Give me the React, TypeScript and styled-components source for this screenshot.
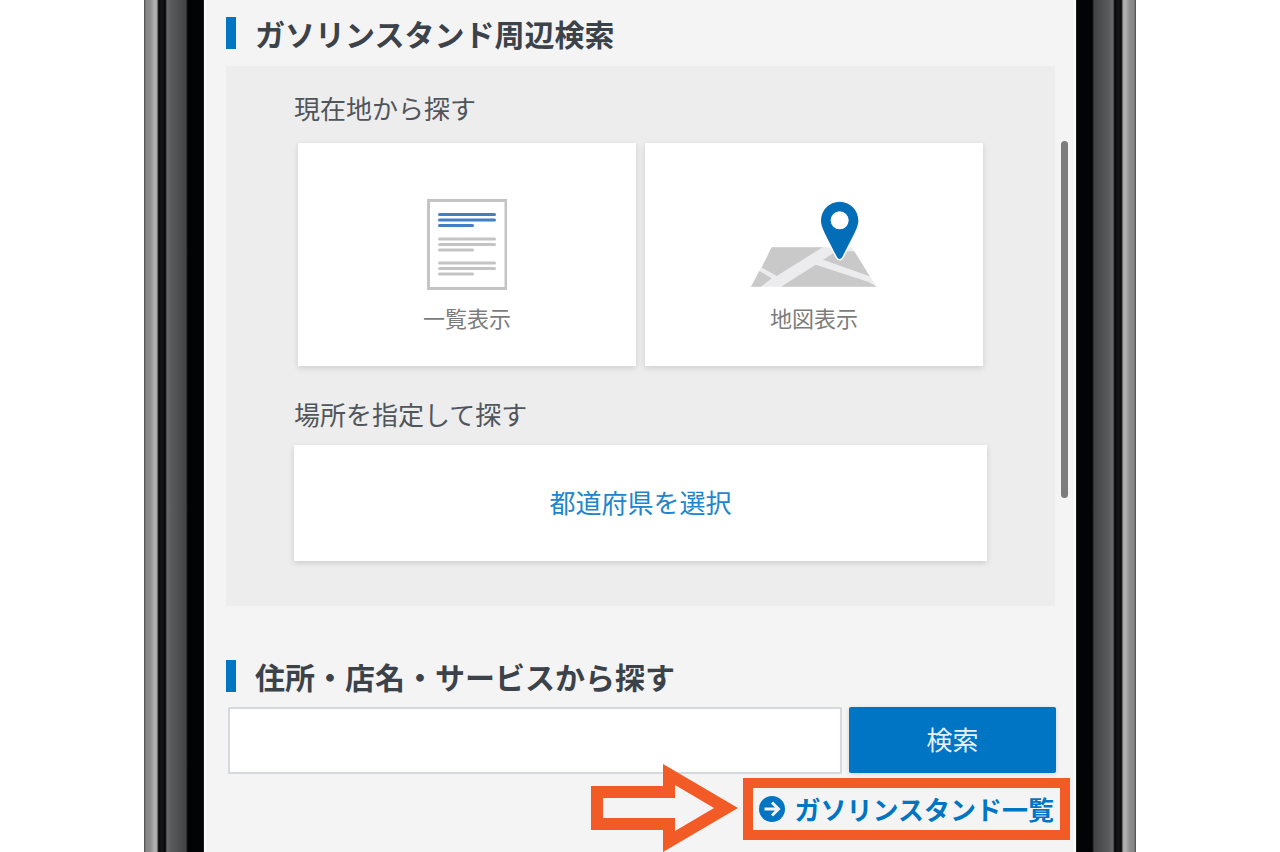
import styled, { createGlobalStyle } from "styled-components";

const GlobalStyle = createGlobalStyle`
  *, *::before, *::after { box-sizing: border-box; }
  body {
    margin: 0;
    background: #fff;
    color: #3c4249;
    font-family: "Noto Sans CJK JP", sans-serif;
  }
  button, input { font-family: inherit; }
`;

const Phone = styled.div`
  display: flex;
  width: 100%;
  max-width: 992px;
  min-height: 100vh;
  margin: 0 auto;
`;

const Bezel = styled.div<{ $side: "left" | "right" }>`
  flex: 0 0 60px;
  background: linear-gradient(
    to ${({ $side }) => ($side === "left" ? "right" : "left")},
    #4a4a4a 0, #858585 2px, #8c8c8c 6px, #b4b4b4 11px, #a5a5a5 13px, #333 14px,
    #08090b 15px, #18191b 18px, #050505 21px, #29292b 22px,
    #686a6c 23px, #58595b 28px, #424345 42px, #1b1b1c 43px,
    #020304 44px, #020304 59px, #3a3a3a 60px
  );
`;

const Screen = styled.main`
  position: relative;
  flex: 1;
  min-width: 0;
  padding: 17px 21px 12px 22px;
  background: #f4f4f4;
  box-shadow: inset 2px 0 #fafafa, inset -2px 0 #fafafa;
`;

const ScrollThumb = styled.div`
  position: absolute;
  top: 141px;
  right: 8px;
  width: 7px;
  height: 357px;
  border-radius: 4px;
  background: #7c7c7c;
`;

const Heading = styled.h2`
  margin: 0;
  padding-left: 19px;
  border-left: 10px solid #0075c2;
  font-size: 30px;
  font-weight: 700;
  line-height: 32px;
`;

const Panel = styled.section`
  margin: 17px 0 54px;
  padding: 26px 68px 45px;
  background: #ededed;
`;

const Label = styled.h3`
  margin: 0;
  color: #50555b;
  font-size: 26px;
  font-weight: 400;
  line-height: 32px;
`;

const Cards = styled.div`
  display: grid;
  grid-template-columns: 1fr 1fr;
  gap: 9px;
  margin: 19px 4px 32px;
`;

const Card = styled.button`
  display: flex;
  flex-direction: column;
  align-items: center;
  justify-content: flex-end;
  gap: 12px;
  height: 223px;
  padding: 0 0 34px;
  border: 0;
  background: #fff;
  box-shadow: 0 2px 6px rgba(0, 0, 0, 0.14);
  color: #7c7c7c;
  font-size: 22px;
  line-height: 30px;
`;

const SelectArea = styled.button`
  display: block;
  width: 100%;
  height: 116px;
  margin-top: 15px;
  padding: 0 0 4px;
  border: 0;
  background: #fff;
  box-shadow: 0 2px 6px rgba(0, 0, 0, 0.14);
  color: #2185cc;
  font-size: 26px;
`;

const SearchForm = styled.form`
  display: flex;
  gap: 7px;
  margin: 15px -1px 4px 2px;
`;

const SearchInput = styled.input`
  flex: 1;
  min-width: 0;
  height: 67px;
  padding: 0 16px;
  border: 2px solid #d5d9de;
  border-radius: 1px;
  background: #fff;
  font-size: 26px;
`;

const SearchButton = styled.button`
  width: 207px;
  height: 66px;
  padding: 0 0 4px;
  border: 0;
  border-radius: 2px;
  background: #0075c4;
  box-shadow: 0 1px 4px rgba(0, 0, 0, 0.14);
  color: #e4f1fa;
  font-size: 26px;
`;

const Callout = styled.div`
  position: relative;
  width: fit-content;
  margin: 0 -15px 0 auto;
  border: 10px solid #f35b26;
`;

const Arrow = styled.svg`
  position: absolute;
  top: -24px;
  right: calc(100% + 14px);
`;

const ListLink = styled.a`
  display: flex;
  align-items: center;
  gap: 10px;
  padding: 0 6px;
  color: #0075c2;
  font-size: 26px;
  font-weight: 700;
  line-height: 42px;
  text-decoration: none;
`;

const ListIcon = () => (
  <svg width="80" height="91" viewBox="0 0 80 91" fill="none" strokeWidth="3" aria-hidden="true">
    <rect x="1.5" y="1.5" width="77.5" height="88" stroke="#c4c4c4" />
    <g strokeLinecap="round">
      <path d="M12.5 15.5h55M12.5 21h55M12.5 26.5h33" stroke="#4280c5" />
      <path
        d="M12.5 40h55M12.5 45.5h55M12.5 51h33M12.5 64h55M12.5 69.5h55M12.5 75h33"
        stroke="#c4c4c4"
      />
    </g>
  </svg>
);

const MapIcon = () => (
  <svg width="126" height="90" viewBox="60 60 378 270" aria-hidden="true">
    <path d="M122 202H362L437 320H60Z" fill="#ececef" />
    <path
      d="M122 202H275L137 288L92 263ZM85 273L122 295L90 320H60ZM254 254L411 305L437 320H150ZM276 239L316 214H370L416 289Z"
      fill="#c9c9c9"
    />
    <path
      d="M326 65C295 65 270 90 270 121C270 142 282 161 318 231C322 239 330 239 334 231C370 161 382 142 382 121C382 90 357 65 326 65Z"
      fill="#046db7"
      stroke="#fff"
      strokeWidth="9"
      paintOrder="stroke"
    />
    <circle cx="326" cy="121" r="27" fill="#fff" />
  </svg>
);

const CircleArrowIcon = () => (
  <svg width="26" height="26" viewBox="0 0 26 26" fill="none" aria-hidden="true">
    <circle cx="13" cy="13" r="13" fill="#0075c2" />
    <path d="M5.5 13H19M13 6.5L19.5 13L13 19.5" stroke="#f4f4f4" strokeWidth="3" />
  </svg>
);

export default function App() {
  return (
    <>
      <GlobalStyle />
      <Phone>
        <Bezel $side="left" />
        <Screen>
          <ScrollThumb />
          <Heading>ガソリンスタンド周辺検索</Heading>
          <Panel>
            <Label>現在地から探す</Label>
            <Cards>
              <Card type="button">
                <ListIcon />
                一覧表示
              </Card>
              <Card type="button">
                <MapIcon />
                地図表示
              </Card>
            </Cards>
            <Label>場所を指定して探す</Label>
            <SelectArea type="button">都道府県を選択</SelectArea>
          </Panel>
          <Heading id="keyword-heading">住所・店名・サービスから探す</Heading>
          <SearchForm onSubmit={(event) => event.preventDefault()}>
            <SearchInput type="text" aria-labelledby="keyword-heading" />
            <SearchButton type="submit">検索</SearchButton>
          </SearchForm>
          <Callout>
            <Arrow width="148" height="88" viewBox="0 0 148 88" aria-hidden="true">
              <path
                fill="#f35b26"
                fillRule="evenodd"
                d="M0 22H72V0L147 44L72 88V66H0ZM12 34V54H84V67L123 44L84 21V34Z"
              />
            </Arrow>
            <ListLink href="#stations">
              <CircleArrowIcon />
              ガソリンスタンド一覧
            </ListLink>
          </Callout>
        </Screen>
        <Bezel $side="right" />
      </Phone>
    </>
  );
}
